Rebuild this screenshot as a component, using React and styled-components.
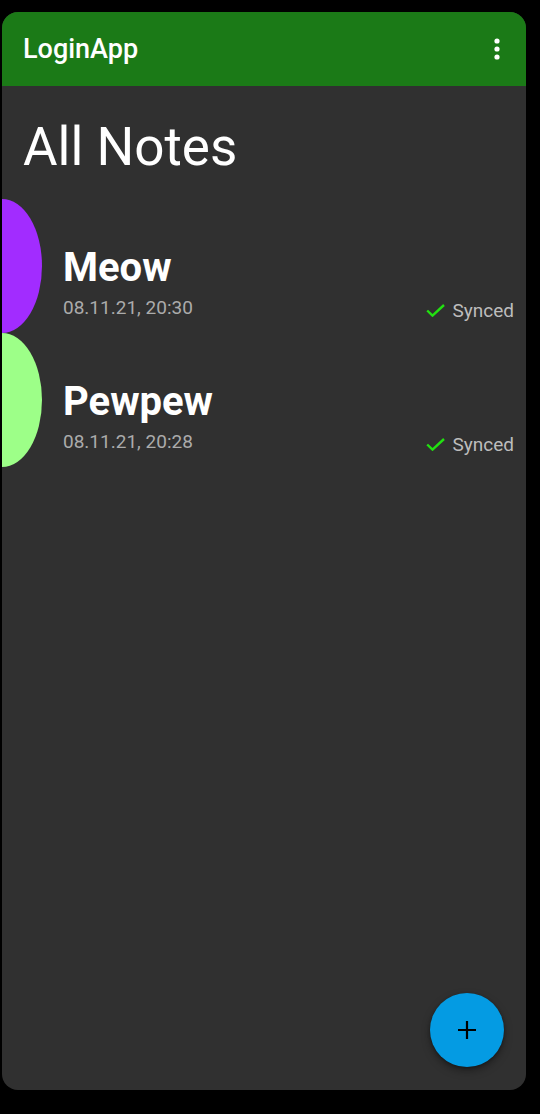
import React from "react";
import styled, { createGlobalStyle } from "styled-components";

const GlobalStyle = createGlobalStyle`
  html, body {
    margin: 0;
    padding: 0;
    background: #000;
    font-family: Roboto, "Noto Sans", Arial, sans-serif;
  }
`;

const Page = styled.div`
  padding: 12px 14px 24px 2px;
`;

const Screen = styled.div`
  position: relative;
  width: 524px;
  height: 1078px;
  background: #303030;
  border-radius: 16px;
  overflow: hidden;
  display: flex;
  flex-direction: column;
`;

const AppBar = styled.header`
  height: 74px;
  flex: none;
  background: #1b7a17;
  display: flex;
  align-items: center;
  justify-content: space-between;
  padding: 0 26px 0 21px;
  box-sizing: border-box;
`;

const AppTitle = styled.h1`
  margin: 0;
  font-size: 27px;
  line-height: 1;
  font-weight: 500;
  color: #fff;
`;

const MenuButton = styled.button`
  border: 0;
  background: none;
  padding: 0;
  display: flex;
  color: #fff;
`;

const Heading = styled.h2`
  margin: 35px 0 25px 21px;
  font-size: 53px;
  line-height: 1;
  font-weight: 400;
  color: #fff;
`;

const List = styled.div`
  display: flex;
  flex-direction: column;
`;

const Row = styled.div`
  display: flex;
  height: 134px;
`;

const Blob = styled.div`
  width: 40px;
  flex: none;
  background: ${(p) => p.color};
  border-radius: 0 40px 40px 0 / 0 67px 67px 0;
`;

const Body = styled.div`
  flex: 1;
  padding: 49px 0 0 21px;
`;

const Title = styled.div`
  font-size: 40px;
  line-height: 1;
  font-weight: 700;
  color: #fff;
`;

const DateText = styled.div`
  margin-top: 10px;
  font-size: 19px;
  line-height: 1;
  color: #ababab;
`;

const Status = styled.div`
  align-self: flex-start;
  margin: 102px 12px 0 0;
  display: flex;
  align-items: center;
  gap: 8px;
  font-size: 19px;
  line-height: 1;
  color: #bdbdbd;
`;

const Fab = styled.button`
  position: absolute;
  right: 22px;
  bottom: 23px;
  width: 74px;
  height: 74px;
  border-radius: 50%;
  border: 0;
  background: #049be3;
  display: flex;
  align-items: center;
  justify-content: center;
  box-shadow: 0 4px 8px rgba(0, 0, 0, 0.35), 0 1px 3px rgba(0, 0, 0, 0.3);
`;

const notes = [
  { title: "Meow", date: "08.11.21, 20:30", color: "#a22cff" },
  { title: "Pewpew", date: "08.11.21, 20:28", color: "#9dff88" },
];

const CheckIcon = () => (
  <svg width="19" height="13" viewBox="0 0 19 13">
    <polyline points="1.2,6.5 6.5,11.6 18,1" fill="none" stroke="#22e011" strokeWidth="2.4" />
  </svg>
);

const Kebab = () => (
  <svg width="6" height="22" viewBox="0 0 6 22">
    <circle cx="3" cy="3" r="2.6" fill="#fff" />
    <circle cx="3" cy="11" r="2.6" fill="#fff" />
    <circle cx="3" cy="19" r="2.6" fill="#fff" />
  </svg>
);

const PlusIcon = () => (
  <svg width="20" height="20" viewBox="0 0 20 20">
    <path d="M10 1v18M1 10h18" stroke="#000" strokeWidth="2.2" fill="none" />
  </svg>
);

export default function App() {
  return (
    <Page>
      <GlobalStyle />
      <Screen>
        <AppBar>
          <AppTitle>LoginApp</AppTitle>
          <MenuButton aria-label="menu">
            <Kebab />
          </MenuButton>
        </AppBar>
        <Heading>All Notes</Heading>
        <List>
          {notes.map((n) => (
            <Row key={n.title}>
              <Blob color={n.color} />
              <Body>
                <Title>{n.title}</Title>
                <DateText>{n.date}</DateText>
              </Body>
              <Status>
                <CheckIcon />
                Synced
              </Status>
            </Row>
          ))}
        </List>
        <Fab aria-label="add">
          <PlusIcon />
        </Fab>
      </Screen>
    </Page>
  );
}
